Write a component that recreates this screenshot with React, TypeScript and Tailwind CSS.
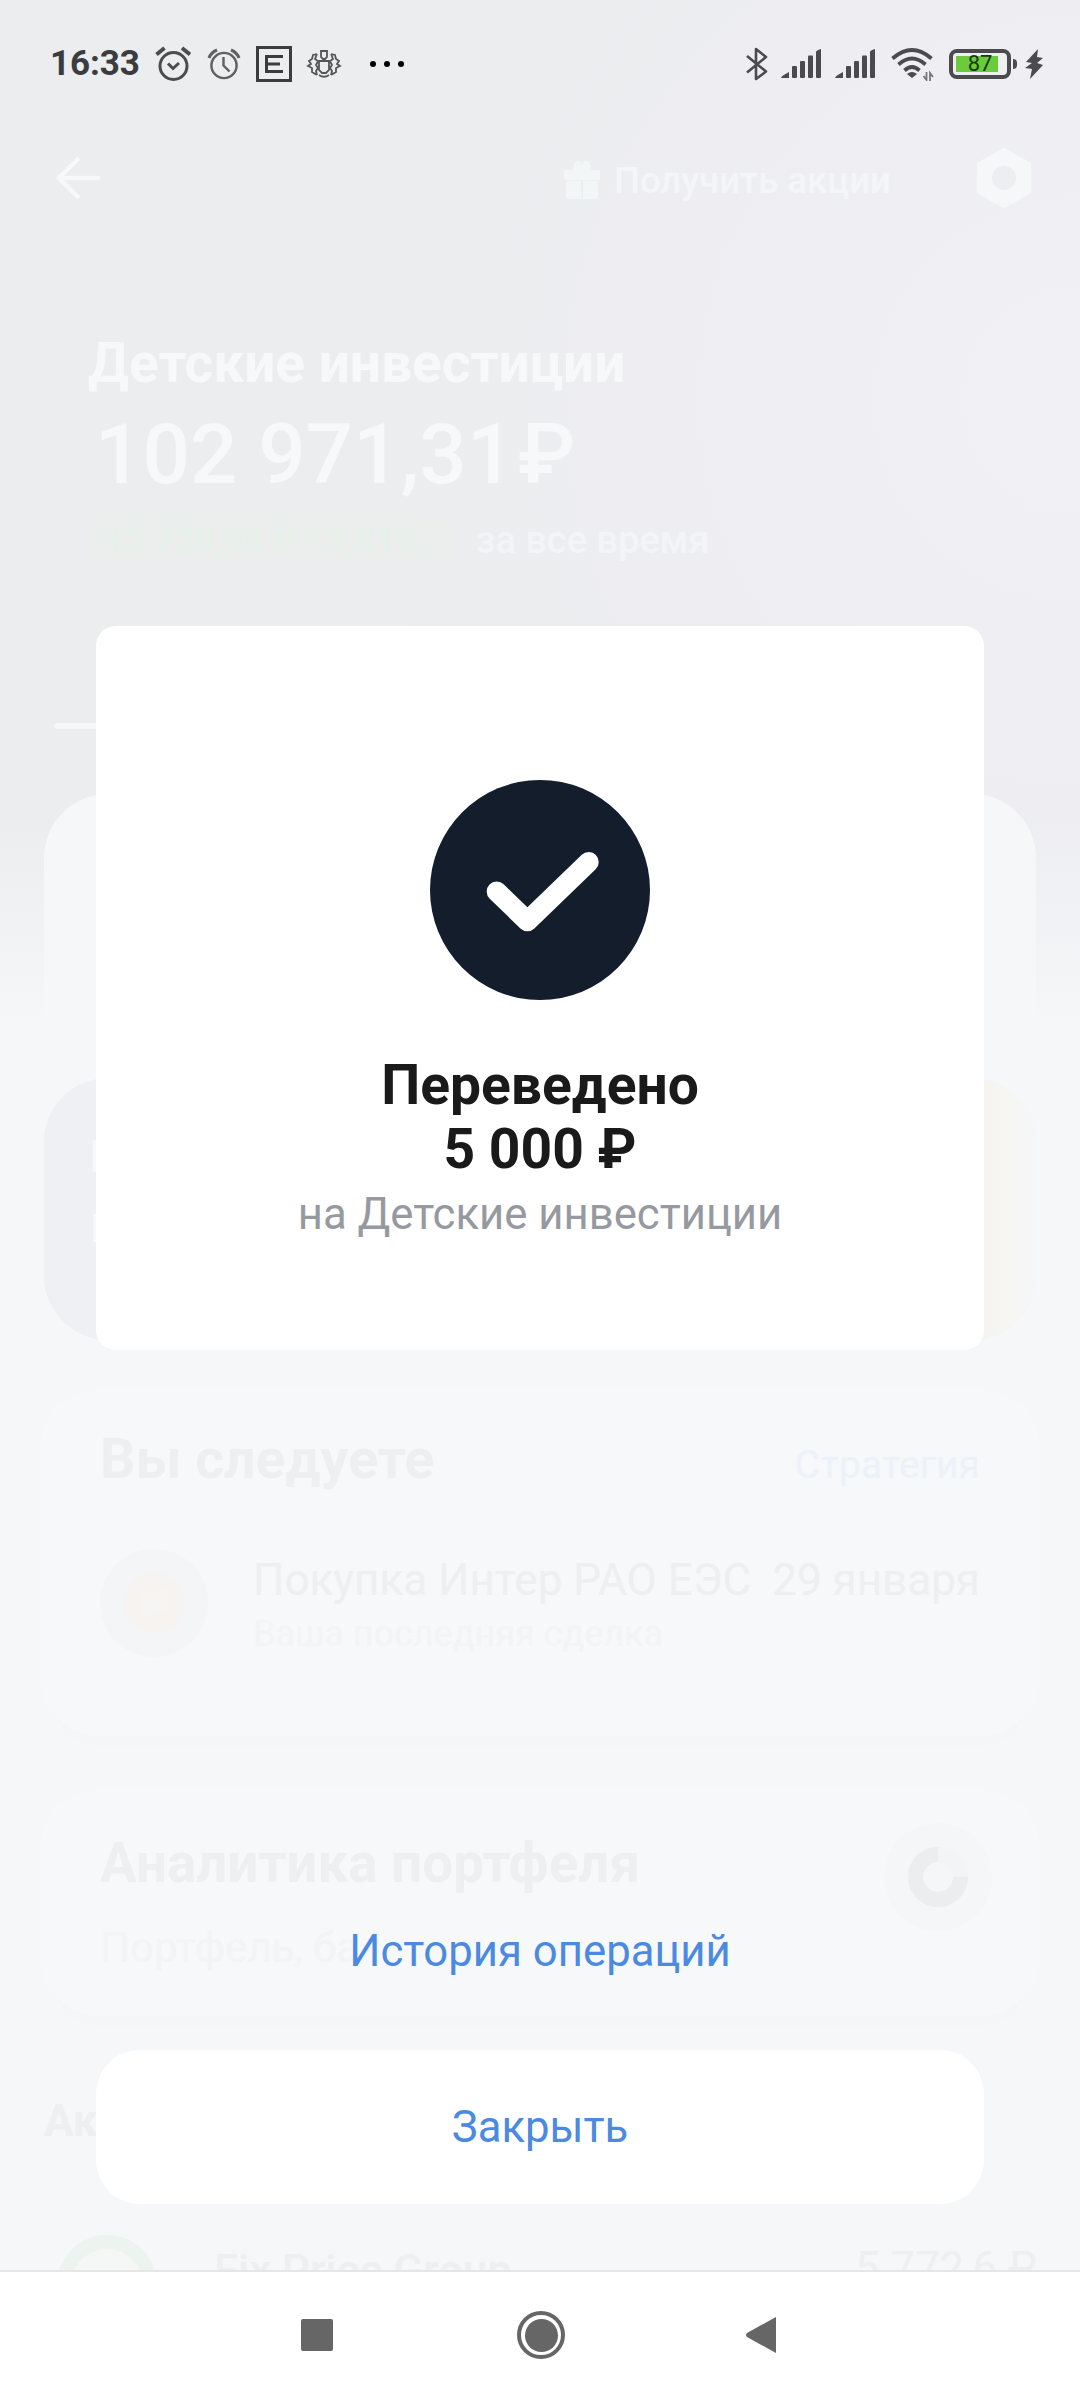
import type { ReactNode } from "react";

const NavigationBar = () => (
  <nav className="flex h-[130px] items-center justify-center gap-[184px] border-t-2 border-[#e6e6e7] bg-white pb-[2px] pr-[2px]">
    <div className="h-8 w-8 rounded-[2px] bg-[#666666]" />
    <div className="flex h-12 w-12 items-center justify-center rounded-full border-[4px] border-[#666666]">
      <div className="h-[33px] w-[33px] rounded-full bg-[#666666]" />
    </div>
    <svg viewBox="0 0 32 38" className="ml-[-4px] h-[38px] w-8" fill="#666666">
      <path d="M31 1v36L2 21q-2-2 0-4z" />
    </svg>
  </nav>
);

const SignalBars = () => (
  <svg viewBox="0 0 40 30" className="h-[30px] w-10" fill="#4b4a4e">
    <path d="M0 29q0-2 8-6v6z" />
    <rect x="11" y="17" width="5" height="12" rx="1" />
    <rect x="19" y="12" width="5" height="17" rx="1" />
    <rect x="27" y="6.500" width="5" height="22.500" rx="1" />
    <path d="M35 3q0-1.500 5-3v28q0 1-1 1h-3q-1 0-1-1z" />
  </svg>
);

const StatusBar = () => (
  <div className="relative flex h-32 items-center pl-[50px] pr-[37px] text-[#3b3c3f]">
    <span className="w-[89px] whitespace-nowrap text-[35px] font-bold leading-10 tracking-[-0.1px]">16:33</span>
    <svg viewBox="0 0 36 36" className="ml-4 h-9 w-9" fill="none" stroke="#4b4c50" strokeWidth="3">
      <circle cx="18.500" cy="20" r="13.500" />
      <path d="M13 17.500l5 5 6-5.500" />
      <path d="M1.500 8.500l8-6.500M27 2l8 6.500" strokeWidth="4" />
    </svg>
    <svg viewBox="0 0 34 34" className="ml-[16px] h-[34px] w-[34px]" fill="none" stroke="#5f6064" strokeWidth="2.400">
      <circle cx="17" cy="18.500" r="12.600" />
      <path d="M16.500 10v8.500l6 6" />
      <path d="M2 11q2-5.500 8-8M24 3q6 2.500 8 8" strokeWidth="3" />
    </svg>
    <svg viewBox="0 0 36 36" className="ml-[15px] h-9 w-9" fill="none" stroke="#3b3c3f" strokeWidth="3">
      <rect x="1.500" y="1.500" width="33" height="33" />
      <path d="M27 10.500H10.500v15H27M10.500 18H24" />
    </svg>
    <svg viewBox="0 0 36 32" className="ml-[14px] h-8 w-9" fill="none" stroke="#55565a" strokeWidth="1.800">
      <path d="M15 3h6v6l-2 2h-2l-2-2zM13 13h10v9l-3 3h-4l-3-3z" />
      <path d="M11 6l-4 1-1 4-3 2 2 3-3 2 4 2 0 4 5 3M11 6L9 11l3 2-2 4 2 3-2 3 1 4" />
      <path d="M25 6l4 1 1 4 3 2-2 3 3 2-4 2 0 4-5 3M25 6l2 5-3 2 2 4-2 3 2 3-1 4" />
      <path d="M13 27q5 3.500 10 0" />
    </svg>
    <div className="ml-[28px] flex gap-2">
      <span className="h-1.5 w-1.5 rounded-full bg-black" />
      <span className="h-1.5 w-1.5 rounded-full bg-black" />
      <span className="h-1.5 w-1.5 rounded-full bg-black" />
    </div>

    <div className="ml-auto flex items-center">
      <svg viewBox="0 0 22 34" className="h-[34px] w-[22px]" fill="none" stroke="#4b4a4e" strokeWidth="2.600">
        <path d="M1 9l19 15.500-10 7.500V2l10 8L1 25.500" strokeLinejoin="round" />
      </svg>
      <div className="ml-[13px] flex gap-[14px]">
        <SignalBars />
        <SignalBars />
      </div>
      <svg viewBox="0 0 44 34" className="ml-[16px] h-[34px] w-11" fill="none" stroke="#4b4a4e" strokeWidth="3.800">
        <path d="M1.500 11.500q19.500-17 39 0M7.500 17.500q13.500-12 27 0M13.500 23.500q7.500-7 15 0" />
        <path d="M21 31l-5-4q5-4 10 0z" fill="#4b4a4e" stroke="none" />
        <path d="M35.500 25v8l-3-4M39 34v-8l3 4" strokeWidth="1.800" stroke="#77767a" />
      </svg>
      <div className="ml-[14px] flex h-[30px] w-[62px] items-center rounded-[8px] border-4 border-[#4b4a4e] px-[3px]">
        <div className="flex h-4 w-[42px] items-center justify-center bg-[#6bcb3b] pl-1.5 text-[22px] leading-4 text-[#163a0e]">
          87
        </div>
      </div>
      <div className="ml-0.5 h-2.5 w-[4px] rounded-r-sm bg-[#4b4a4e]" />
      <svg viewBox="0 0 18 30" className="ml-[8px] h-[30px] w-[18px]" fill="#4b4a4e">
        <path d="M13 0L1 13l6 1-7 5 7 1-2 10L18 16l-6-2 6-5-6-1z" />
      </svg>
    </div>
  </div>
);

const Header = () => (
  <div className="flex h-[100px] items-center pl-14 pr-[47px] text-[#f4f5f8]">
    <svg viewBox="0 0 44 44" className="h-11 w-11" fill="none" stroke="#f6f8f9" strokeWidth="4.500">
      <path d="M23 2L3 22l20 20M3 22h41" />
    </svg>
    <svg viewBox="0 0 36 40" className="ml-[464px] mt-1 h-10 w-9" fill="#f3f6f7">
      <path d="M0 10h9q0-9 5-9 4 0 4 5 0-5 4-5 5 0 5 9h9v10H0zM2 21h15v18H5q-3 0-3-3zM19 21h15v15q0 3-3 3H19z" />
    </svg>
    <span className="ml-[14px] mt-[5px] w-[278px] whitespace-nowrap text-[36.500px] font-medium leading-10">
      Получить акции
    </span>
    <svg viewBox="0 0 58 62" className="ml-auto h-[62px] w-[58px]">
      <path
        d="M29 3L54 17v28L29 59 4 45V17z"
        fill="#f5f7f8"
        stroke="#f5f7f8"
        strokeWidth="4"
        strokeLinejoin="round"
      />
      <circle cx="29" cy="31" r="12" fill="#edeef1" />
    </svg>
  </div>
);

const Summary = () => (
  <div className="px-[88px] text-[#f6f8fa]">
    <h1 className="mt-[103px] whitespace-nowrap text-[55px] font-bold leading-[64px]">Детские инвестиции</h1>
    <p className="ml-[7px] mt-3 whitespace-nowrap text-[83.500px] font-medium leading-[96px]">
      102 971,31<span className="ml-[4px]">₽</span>
    </p>
    <div className="mt-[11px] flex h-[52px] items-center text-[38px] leading-[52px]">
      <span className="mr-[22px] w-[366px] whitespace-nowrap rounded-xl bg-[#ebeeed] pl-4 text-[36px] font-medium text-[#e5f1e9]">
        +3 730,98 ₽ · 3,81%
      </span>
      <span className="whitespace-nowrap font-medium text-[#f3f4f7]">за все время</span>
    </div>
  </div>
);

const Card = ({ className, children }: { className: string; children?: ReactNode }) => (
  <section className={`mx-10 rounded-[60px] bg-[#f6f8f9] shadow-[0_20px_16px_-10px_rgba(0,0,0,0.008)] ${className}`}>
    {children}
  </section>
);

const Portfolio = () => (
  <div className="h-[2270px] overflow-hidden bg-[#f5f7f9]">
    <div className="bg-[linear-gradient(to_bottom,transparent_820px,#f5f7f9_1030px),radial-gradient(circle_at_1080px_400px,#f0f0f5_0px,#eeeef2_430px,#ecedef_720px,#ebedee_1080px)]">
      <StatusBar />
      <Header />
      <Summary />
      <div className="ml-[54px] mt-[157px] h-1.5 w-60 rounded-full bg-[#f5f7f9]" />
      <div className="mx-11 mt-[65px] h-[236px] rounded-t-[64px] bg-[#f5f7f9]" />
    </div>

    <div className="mx-11 mt-12 flex h-[262px] justify-between overflow-hidden rounded-[64px] bg-[#eff0f4]">
      <div className="pl-[46px] pt-[53px] text-[#f7f8fa]">
        <p className="text-[44px] font-bold leading-[52px]">Пульс</p>
        <p className="mt-6 text-[38px] leading-[44px]">Новости</p>
      </div>
      <div className="w-20 bg-[linear-gradient(to_right,#f5f4f0_30px,#f6f6f3_55px,#f5f6f7_80px)]" />
    </div>

    <Card className="mt-[50px] h-[346px] pl-[60px] pr-[60px] pt-[38px]">
      <div className="flex items-baseline justify-between whitespace-nowrap">
        <h2 className="text-[55.500px] font-bold leading-[64px] text-[#edeff0]">Вы следуете</h2>
        <span className="text-[39px] leading-[44px] text-[#edf2f8]">Стратегия</span>
      </div>
      <div className="mt-[57px] flex whitespace-nowrap">
        <div className="flex h-[108px] w-[108px] shrink-0 items-center justify-center rounded-full bg-[#f3f5f6]">
          <div className="flex h-[60px] w-[60px] items-center justify-center rounded-full bg-[#f6f3f1]">
            <div className="h-6 w-7 -skew-y-12 rounded-md bg-[#f6f5f4]" />
          </div>
        </div>
        <div className="ml-[45px] flex-1 pt-[5px]">
          <div className="flex justify-between text-[44px] leading-[52px] text-[#edeff0]">
            <span>Покупка Интер РАО ЕЭС</span>
            <span>29 января</span>
          </div>
          <p className="mt-[6px] text-[36px] leading-[44px] text-[#f2f4f6]">Ваша последняя сделка</p>
        </div>
      </div>
    </Card>

    <Card className="mt-[54px] flex h-[226px] justify-between pl-[60px] pr-[48px]">
      <div className="whitespace-nowrap pt-[41px]">
        <h2 className="text-[54.800px] font-bold leading-[64px] text-[#edeff0]">Аналитика портфеля</h2>
        <p className="mt-[29px] text-[42px] leading-[48px] text-[#f2f4f5]">Портфель, ба</p>
      </div>
      <div className="mt-[33px] flex h-[108px] w-[108px] items-center justify-center rounded-full bg-[#f5f6f8]">
        <svg viewBox="0 0 60 60" className="h-[60px] w-[60px]" fill="none" strokeWidth="15">
          <circle cx="30" cy="30" r="22.500" stroke="#f2f4f6" />
          <path d="M30 7.500A22.500 22.500 0 1 0 52.500 30" stroke="#ebedef" />
        </svg>
      </div>
    </Card>

    <h2 className="ml-11 mt-[79px] text-[44px] font-bold leading-[52px] text-[#eeeff1]">Акции</h2>
    <div className="mt-[88px] flex pl-[57px] pr-[43px] text-[43.700px] leading-[52px] text-[#eeeff1]">
      <div className="flex h-[100px] w-[100px] items-center justify-center rounded-full border-[14px] border-[#edf3ef] bg-[#f4f7f6]">
        <div className="h-5 w-10 bg-[#edeff5]" />
      </div>
      <span className="ml-[57px] mt-[10px] font-medium">Fix Price Group</span>
      <span className="ml-auto mt-[7px]">5 772,6 ₽</span>
    </div>
  </div>
);

const TransferDialog = () => (
  <div className="absolute left-24 top-[626px] flex h-[724px] w-[888px] flex-col items-center whitespace-nowrap rounded-[20px] bg-white pt-[154px]">
    <svg viewBox="0 0 220 220" className="h-[220px] w-[220px]" fill="none">
      <circle cx="110" cy="110" r="110" fill="#141d2b" />
      <path
        d="M66.700 111.500L97.400 141.300 158.700 82"
        stroke="white"
        strokeWidth="20"
        strokeLinecap="round"
        strokeLinejoin="round"
      />
    </svg>
    <h2 className="mt-[53px] text-center text-[55.200px] font-bold leading-16 text-[#1a1a1a]">
      Переведено
      <br />5 000 ₽
    </h2>
    <p className="mt-[7px] text-[43.700px] leading-[52px] text-[#9699a0]">на Детские инвестиции</p>
  </div>
);

const DialogActions = () => (
  <div className="absolute left-24 top-[1925px] flex w-[888px] flex-col items-center text-[43.700px] leading-[52px] text-[#4b8ae0]">
    <button>История операций</button>
    <button className="mt-[73px] h-[154px] w-full rounded-[44px] bg-white">Закрыть</button>
  </div>
);

export default function App() {
  return (
    <div className="relative h-[2400px] w-[1080px] overflow-hidden font-['Roboto',sans-serif]">
      <Portfolio />
      <NavigationBar />
      <TransferDialog />
      <DialogActions />
    </div>
  );
}
